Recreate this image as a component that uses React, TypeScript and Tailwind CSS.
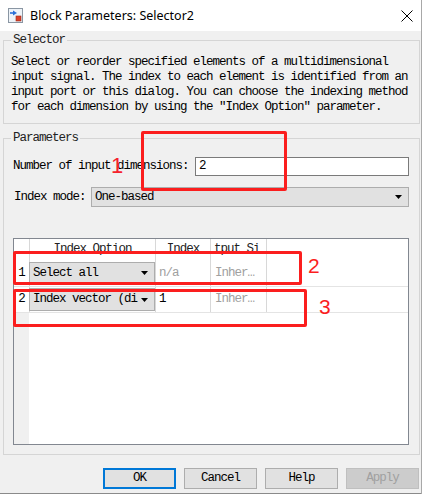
import React from 'react';

const mono = "font-['Liberation_Mono','Noto_Sans_CJK_SC',monospace] text-[12.5px] tracking-[-1px] leading-[15px]";

const Arrow = () => (
  <svg width="9" height="6" viewBox="0 0 9 6">
    <path d="M1 1h7L4.5 5z" fill="#000" />
  </svg>
);

const BlockIcon = () => (
  <svg width="15" height="15" viewBox="0 0 15 15">
    <rect x="0.5" y="0.5" width="14" height="14" fill="#fff" stroke="#8a96a3" />
    <rect x="1" y="1" width="13" height="13" fill="#eef3f8" />
    <path d="M2 5h4" stroke="#2a6fd6" strokeWidth="1.6" />
    <path d="M5 2.5l4 2.5-4 2.5z" fill="#2a6fd6" />
    <rect x="8" y="8" width="5" height="5" fill="#d8402a" stroke="#9a2a1a" strokeWidth="0.6" />
  </svg>
);

const Button = ({ label, kind }: { label: string; kind?: 'default' | 'disabled' }) => {
  const cls =
    kind === 'default'
      ? 'border-2 border-[#0078d7] bg-[#e1e1e1] text-black'
      : kind === 'disabled'
      ? 'border border-[#bfbfbf] bg-[#cccccc] text-[#a0a0a0]'
      : 'border border-[#adadad] bg-[#e1e1e1] text-black';
  return (
    <div className={`w-[73px] h-[21px] flex items-center justify-center ${cls} ${mono}`}>{label}</div>
  );
};

const RowSelect = ({ text }: { text: string }) => (
  <div className="w-[126px] -ml-px h-[23px] bg-[#e1e1e1] border border-[#adadad] flex items-center pl-[3px] pr-[5px]">
    <span className="flex-1 overflow-hidden whitespace-nowrap">{text}</span>
    <Arrow />
  </div>
);

const App = () => {
  return (
    <div className={`relative w-[422px] h-[494px] bg-[#f0f0f0] border-r border-[#a8a8a8] overflow-hidden text-black ${mono}`}>
      {/* title bar */}
      <div className="h-[31px] bg-white flex items-center pl-[8px]">
        <BlockIcon />
        <span className="ml-[7px] font-['Noto_Sans',sans-serif] text-[12.5px] tracking-normal text-black">
          Block Parameters: Selector2
        </span>
        <svg className="ml-auto mr-[8px]" width="12" height="12" viewBox="0 0 12 12">
          <path d="M0.5 0.5l11 11M11.5 0.5l-11 11" stroke="#000" strokeWidth="1" />
        </svg>
      </div>

      {/* Selector group */}
      <fieldset className="mt-[2px] ml-[3px] w-[417px] border border-[#d5d5d5] pl-[7px] pt-[7px] pb-[8px]">
        <legend className="px-[2px] text-[#222]">Selector</legend>
        <p className="whitespace-nowrap">
          Select or reorder specified elements of a multidimensional
          <br />
          input signal. The index to each element is identified from an
          <br />
          input port or this dialog. You can choose the indexing method
          <br />
          for each dimension by using the "Index Option" parameter.
        </p>
      </fieldset>

      {/* Parameters group */}
      <fieldset className="mt-[7px] ml-[3px] w-[417px] border border-[#d5d5d5] pl-[9px] pr-[10px] pt-[11px] pb-[9px]">
        <legend className="-ml-[2px] px-[2px] text-[#222]">Parameters</legend>
        <div className="flex items-center h-[19px]">
          <span className="w-[182px] whitespace-nowrap">Number of input dimensions:</span>
          <div className="flex-1 h-[19px] bg-white border border-[#7a7a7a] flex items-center pl-[3px]">2</div>
        </div>
        <div className="flex items-center h-[20px] mt-[11px]">
          <span className="w-[78px] pl-px whitespace-nowrap">Index mode:</span>
          <div className="flex-1 h-[20px] bg-[#e1e1e1] border border-[#adadad] flex items-center pl-[3px] pr-[5px]">
            <span className="flex-1">One-based</span>
            <Arrow />
          </div>
        </div>

        {/* table */}
        <div className="mt-[31px] w-[396px] h-[207px] border border-[#828790] bg-white flex flex-col">
          <div className="flex h-[21px]">
            <div className="w-[16px] border-r border-[#d8d8d8]" />
            <div className="w-[126px] border-r border-[#d8d8d8] flex items-center justify-center text-[#222]">Index Option</div>
            <div className="w-[55px] border-r border-[#d8d8d8] flex items-center justify-center text-[#222]">Index</div>
            <div className="w-[56px] border-r border-[#d8d8d8] flex items-center pl-[3px] overflow-hidden whitespace-nowrap text-[#222]">tput Si</div>
          </div>
          <div className="flex h-[27px] border-b border-[#e4e4e4]">
            <div className="w-[16px] border-r border-[#d8d8d8] flex items-center justify-center">1</div>
            <div className="w-[126px] border-r border-[#d8d8d8] flex items-center">
              <RowSelect text="Select all" />
            </div>
            <div className="w-[55px] border-r border-[#d8d8d8] flex items-center pl-[3px] text-[#a0a0a0]">n/a</div>
            <div className="w-[56px] border-r border-[#d8d8d8] flex items-center pl-[4px] text-[#a0a0a0] whitespace-nowrap">Inher…</div>
          </div>
          <div className="flex h-[26px] border-b border-[#e4e4e4]">
            <div className="w-[16px] border-r border-[#d8d8d8] flex items-center justify-center">2</div>
            <div className="w-[126px] border-r border-[#d8d8d8] flex items-center">
              <RowSelect text="Index vector (di" />
            </div>
            <div className="w-[55px] border-r border-[#d8d8d8] flex items-center pl-[3px]">1</div>
            <div className="w-[56px] border-r border-[#d8d8d8] flex items-center pl-[4px] text-[#a0a0a0] whitespace-nowrap">Inher…</div>
          </div>
          <div className="flex-1 flex">
            <div className="w-[15px] bg-[#f0f0f0]" />
          </div>
        </div>
      </fieldset>

      {/* buttons */}
      <div className="mt-[13px] flex justify-end gap-[8px] pr-[2px]">
        <Button label="OK" kind="default" />
        <Button label="Cancel" />
        <Button label="Help" />
        <Button label="Apply" kind="disabled" />
      </div>
      <div className="mt-[4px] h-px bg-[#8a8a8a]" />

      {/* red annotations */}
      <div className="absolute left-[141px] top-[131px] w-[146px] h-[60px] border-[3px] border-[#fb1e1e] rounded-[2px]" />
      <span className="absolute left-[111px] top-[153px] font-['Liberation_Sans',sans-serif] text-[22px] tracking-normal leading-[26px] text-[#f5222d]">1</span>
      <div className="absolute left-[13px] top-[251px] w-[289px] h-[34px] border-[3px] border-[#fb1e1e] rounded-[2px]" />
      <span className="absolute left-[308px] top-[253px] font-['Liberation_Sans',sans-serif] text-[21px] tracking-normal leading-[26px] text-[#fb1e1e]">2</span>
      <div className="absolute left-[13px] top-[289px] w-[294px] h-[38px] border-[3px] border-[#fb1e1e] rounded-[2px]" />
      <span className="absolute left-[319px] top-[294px] font-['Liberation_Sans',sans-serif] text-[21px] tracking-normal leading-[26px] text-[#fb1e1e]">3</span>
    </div>
  );
};

export default App;
